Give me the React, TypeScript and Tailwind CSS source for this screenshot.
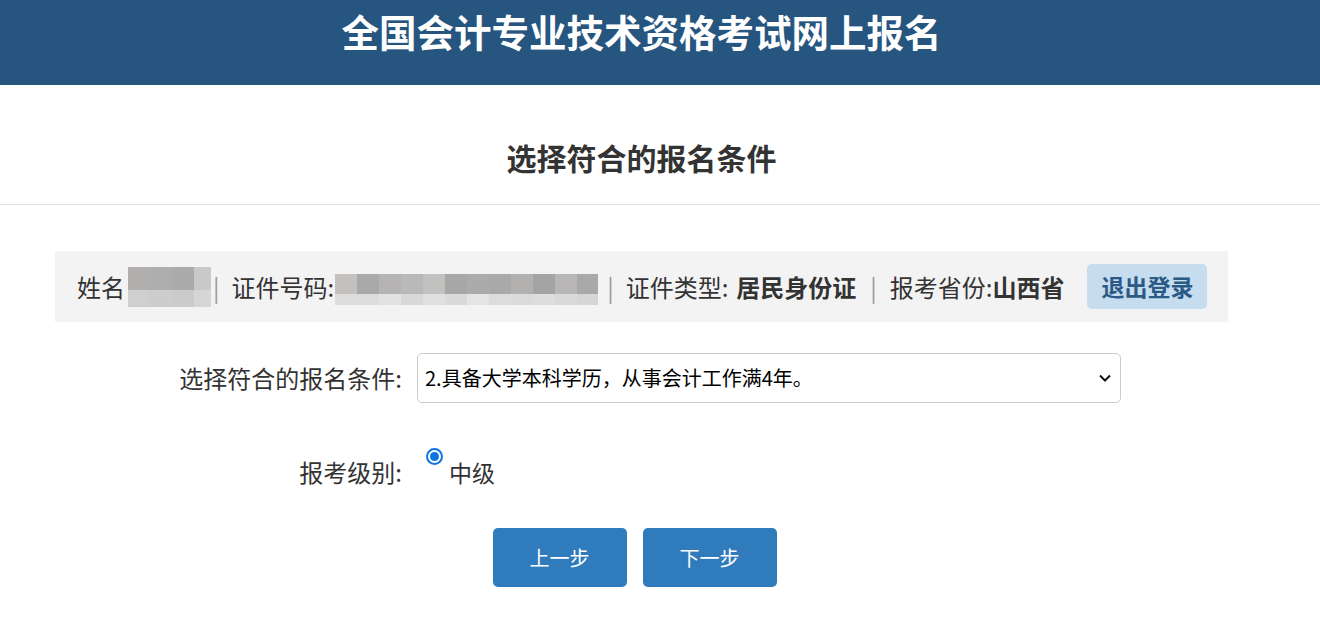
import React from 'react';

const font = { fontFamily: '"Noto Sans CJK SC", "Noto Sans", sans-serif' };

function Mask({ cols, top, bottom, h1, h2 }: { cols: number[]; top: string[]; bottom: string[]; h1: number; h2: number }) {
  return (
    <span className="inline-flex flex-col">
      <span className="flex">
        {cols.map((w, i) => <span key={i} style={{ width: w, height: h1, background: top[i % top.length] }} />)}
      </span>
      <span className="flex">
        {cols.map((w, i) => <span key={i} style={{ width: w, height: h2, background: bottom[i % bottom.length] }} />)}
      </span>
    </span>
  );
}

export default function App() {
  return (
    <div className="min-h-[621px] bg-white text-[#333]" style={font}>
      <div className="h-[85px] bg-[#265680]">
        <div className="w-[1283px] pt-[6px] text-center text-[37.5px] font-bold leading-[50px] text-white">全国会计专业技术资格考试网上报名</div>
      </div>

      <div className="h-[120px] border-b border-[#dddddd]">
        <div className="flex h-full w-[1283px] items-center justify-center pt-[26px] text-[30px] font-bold text-[#333]">选择符合的报名条件</div>
      </div>

      <div className="w-[1283px] px-[55px] pt-[46px]">
        <div className="flex h-[71px] items-center bg-[#f3f3f3] pl-[22px] text-[24px]">
          <span>姓名</span>
          <span className="ml-[3px] mt-[-4px]">
            <Mask cols={[22, 22, 22, 17]} top={['#b3aeae', '#aeaeae', '#ababab', '#c9c9c9']} bottom={['#cfcfcf', '#cdcdcd', '#cbcbcb', '#d6d6d6']} h1={23} h2={17} />
          </span>
          <span className="ml-[2px] mr-[12px] text-[#999]">|</span>
          <span>证件号码:</span>
          <span className="ml-[1px] mt-[-2px]">
            <Mask cols={[22, 22, 22, 22, 22, 22, 22, 22, 22, 22, 22, 21]} top={['#c4c0be', '#a9a9a9', '#b5b3b3', '#b9b9b9', '#c3c1bf', '#a7a7a7', '#ababab', '#a9a9a9', '#b3b0b0', '#a4a4a4', '#b8b6b6', '#a9a9a9']} bottom={['#dddddd', '#dcdcdc', '#e2e2e2', '#d8d8d8', '#e0e0e0', '#dadada', '#e4e4e4', '#dcdcdc', '#dbdbdb', '#dddddd', '#d9d9d9', '#d6d6d6']} h1={20} h2={11} />
          </span>
          <span className="ml-[9px] mr-[12px] text-[#999]">|</span>
          <span>证件类型:</span>
          <span className="ml-[8px] font-bold">居民身份证</span>
          <span className="ml-[14px] mr-[13px] text-[#999]">|</span>
          <span>报考省份:</span>
          <span className="font-bold">山西省</span>
          <button className="ml-[23px] flex h-[45px] w-[120px] items-center justify-center rounded-[5px] bg-[#c6dcef] text-[23px] font-bold text-[#2b5a87]">退出登录</button>
        </div>

        <div className="mt-[31px] flex items-center">
          <div className="w-[347px] text-right text-[24px] text-[#333]">选择符合的报名条件:</div>
          <div className="ml-[15px] flex h-[50px] w-[704px] items-center justify-between rounded-[5px] border border-[#cccccc] bg-white pl-[7px] pr-[8px] text-[20px] text-black">
            <span>2.具备大学本科学历，从事会计工作满4年。</span>
            <svg width="14" height="10" viewBox="0 0 14 10" fill="none"><path d="M2 2.5 L7 7.5 L12 2.5" stroke="#111" strokeWidth="2" /></svg>
          </div>
        </div>

        <div className="mt-[42px] flex h-[54px] items-center">
          <div className="w-[347px] text-right text-[24px] text-[#333]">报考级别:</div>
          <span className="ml-[24px] mt-[3px] flex h-[17px] w-[17px] items-center justify-center self-start rounded-full border-2 border-[#0b74e5] bg-white">
            <span className="h-[9px] w-[9px] rounded-full bg-[#0b74e5]" />
          </span>
          <span className="ml-[6px] text-[23px] text-[#333]">中级</span>
        </div>

        <div className="mt-[29px] flex w-[1173px] justify-center gap-[16px] pr-[14px]">
          <button className="h-[59px] w-[134px] rounded-[5px] bg-[#2f7bbc] text-[20px] text-white">上一步</button>
          <button className="h-[59px] w-[134px] rounded-[5px] bg-[#2f7bbc] text-[20px] text-white">下一步</button>
        </div>
      </div>
    </div>
  );
}
